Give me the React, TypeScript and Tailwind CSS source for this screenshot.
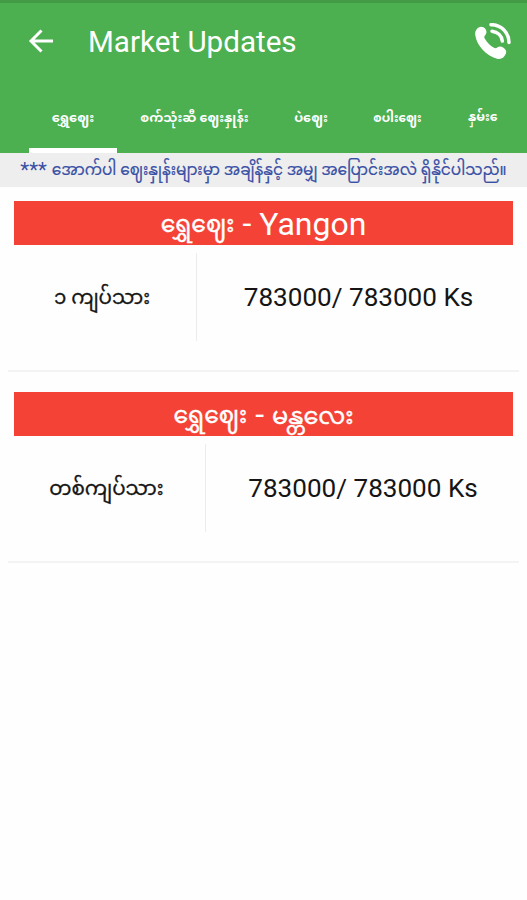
import React from "react";

const tabs = [
  { label: "ရွှေဈေး", box: "w-[88px]", size: "text-[13px]" },
  { label: "စက်သုံးဆီ ဈေးနှုန်း", box: "w-[155px]", size: "text-[12.7px]" },
  { label: "ပဲဈေး", box: "w-[78px]", size: "text-[12.8px]" },
  { label: "စပါးဈေး", box: "w-[95px]", size: "text-[12px]" },
  { label: "နှမ်း\u00A0\u1031", box: "w-[79px]", size: "text-[12.6px]" },
];

const cards = [
  { name: "ရွှေဈေး", place: "Yangon", placeSize: "text-[32px] pt-[2px]", unit: "၁ ကျပ်သား", price: "783000/ 783000 Ks", unitBox: "w-[189px]", gap: "mt-[14px]" },
  { name: "ရွှေဈေး", place: "မန္တလေး", placeSize: "text-[24px] pt-[3px] [-webkit-text-stroke:0.4px]", unit: "တစ်ကျပ်သား", price: "783000/ 783000 Ks", unitBox: "w-[198px]", gap: "mt-[20px]" },
];

function BackIcon() {
  return (
    <svg width="26" height="26" viewBox="0 0 26 26" fill="none" stroke="#fff" strokeWidth="3">
      <path d="M25 12H3M13.500 1.500L3 12l10.500 10.500" />
    </svg>
  );
}

function CallIcon() {
  return (
    <svg width="36" height="37" viewBox="0 0 36 37" fill="none">
      <path
        d="M1.500 6.500C4 3 8 3 10.500 6C12 8.500 11.800 10.500 10 12.500C9 13.500 9 14.500 10 16C12.500 20 15.500 22.800 19 24.800C20.500 25.500 21.500 25.200 22.500 24.300C24.500 23 26.500 23.300 28.500 24.800C32 27.500 32 30 29.500 33C27.500 35.800 25 36.300 22 35.800C11 32.800 2 22.500 0.400 13C0 10.500 0 8.500 1.500 6.500Z"
        fill="#fff"
      />
      <path d="M16 1.700C26 1.500 34 9.500 34 19.500M17 8.200C23 9 26.800 13 27.300 18" stroke="#fff" strokeWidth="3.500" strokeLinecap="round" />
    </svg>
  );
}

export default function App() {
  return (
    <div className="h-[900px] w-[527px] overflow-hidden bg-[#fefefe] font-[Roboto,'Noto_Sans_Myanmar','Noto_Sans',sans-serif]">
      <header className="h-[153px] border-t-[3px] border-[#439a46] bg-[#4caf50] text-white">
        <div className="flex h-[77px] items-center pr-[16px] pl-[28px]">
          <BackIcon />
          <h1 className="ml-[34px] flex-1 pt-[2px] text-[29.6px] leading-none">Market Updates</h1>
          <CallIcon />
        </div>
        <nav className="flex h-[73px] pl-[29px]">
          {tabs.map((tab, i) => (
            <div key={i} className={`${tab.box} flex shrink-0 flex-col items-center`}>
              <span className={`${tab.size} flex h-[67px] items-center pt-[8px] font-bold whitespace-nowrap`}>{tab.label}</span>
              {i === 0 && <span className="mt-[1px] h-[5px] w-full bg-white" />}
            </div>
          ))}
        </nav>
      </header>
      <p className="flex h-[34px] items-center justify-center gap-[5px] bg-[#eeeeee] text-[15.35px] whitespace-nowrap text-[#3850a5]">
        <span className="text-[20.5px] leading-none">***</span>
        <span className="pt-[1px] [-webkit-text-stroke:0.2px]">အောက်ပါ ဈေးနှုန်းများမှာ အချိန်နှင့် အမျှ အပြောင်းအလဲ ရှိနိုင်ပါသည်။</span>
      </p>
      <main className="px-[8px]">
        {cards.map((card, i) => (
          <section key={i} className={card.gap}>
            <h2 className="mx-[6px] flex h-[44px] items-center justify-center gap-[8px] bg-[#f44336] leading-none whitespace-nowrap text-white">
              <span className="pt-[4px] text-[23.5px] [-webkit-text-stroke:0.4px]">{card.name}</span>
              <span className="text-[32px]">-</span>
              <span className={card.placeSize}>{card.place}</span>
            </h2>
            <div className="mt-[8px] flex h-[88px]">
              <div className={`${card.unitBox} flex items-center justify-center border-r border-[#ececec] pt-[2px] text-[19.8px] text-[#151515] [-webkit-text-stroke:0.3px]`}>
                {card.unit}
              </div>
              <div className="flex flex-1 items-center justify-center pt-[2px] pl-[1px] text-[26.1px] text-[#151515]">{card.price}</div>
            </div>
            <div className="mt-[29px] h-[2px] bg-[#f3f3f3]" />
          </section>
        ))}
      </main>
    </div>
  );
}
